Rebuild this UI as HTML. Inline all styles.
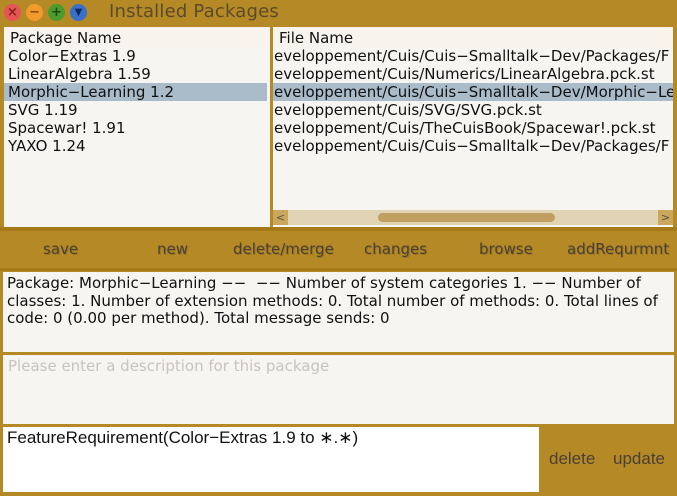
<!DOCTYPE html>
<html><head><style>
*{margin:0;padding:0;box-sizing:border-box}
body{width:677px;height:496px;background:#b58a26;position:relative;overflow:hidden;font-family:"DejaVu Sans","Liberation Sans",sans-serif;font-size:15px;color:#111}
.abs{position:absolute}
.title{left:109px;top:1px;font-size:18px;color:#5a4a2a;letter-spacing:0.2px}
.c{width:17px;height:17px;border-radius:50%;top:4px;text-align:center;font-size:13px;line-height:17px;font-weight:bold}
.panel{background:#f7f5f2;overflow:hidden;white-space:nowrap}
.row{height:18px;line-height:18px;padding-left:4px}
.hdr{background:#f8f3ec;height:20px;line-height:22px;padding-left:6px}
.sel{background:#aabbc9}
.btn{top:240px;color:#4a4035;font-size:15px;text-shadow:1px 1px 0 #9a7520}
</style></head><body>
<div class="abs c" style="left:4px;background:#e65454;color:#8a2020">×</div>
<div class="abs c" style="left:26px;background:#f39a2d;color:#8a4a10">−</div>
<div class="abs c" style="left:48px;background:#4d9a2d;color:#1d4a10">+</div>
<div class="abs c" style="left:70px;background:#3a6fc9;color:#102a60;font-size:10px">▼</div>
<div class="abs title">Installed Packages</div>

<div class="abs panel" style="left:4px;top:27px;width:266px;height:200px">
<div class="hdr">Package Name</div>
<div class="row">Color−Extras 1.9</div>
<div class="row">LinearAlgebra 1.59</div>
<div class="row sel" style="margin-right:3px">Morphic−Learning 1.2</div>
<div class="row">SVG 1.19</div>
<div class="row">Spacewar! 1.91</div>
<div class="row">YAXO 1.24</div>
</div>

<div class="abs panel" style="left:273px;top:27px;width:400px;height:200px">
<div class="hdr">File Name</div>
<div class="row" style="padding-left:1px">eveloppement/Cuis/Cuis−Smalltalk−Dev/Packages/F</div>
<div class="row" style="padding-left:1px">eveloppement/Cuis/Numerics/LinearAlgebra.pck.st</div>
<div class="row sel" style="padding-left:1px">eveloppement/Cuis/Cuis−Smalltalk−Dev/Morphic−Le</div>
<div class="row" style="padding-left:1px">eveloppement/Cuis/SVG/SVG.pck.st</div>
<div class="row" style="padding-left:1px">eveloppement/Cuis/TheCuisBook/Spacewar!.pck.st</div>
<div class="row" style="padding-left:1px">eveloppement/Cuis/Cuis−Smalltalk−Dev/Packages/F</div>
<div class="abs" style="left:0;top:183px;width:400px;height:15px;background:#e0d4b5"></div>
<div class="abs" style="left:0;top:183px;width:15px;height:15px;background:#c9a85e;color:#5a5040;font-size:11px;text-align:center;line-height:15px">&lt;</div>
<div class="abs" style="left:385px;top:183px;width:15px;height:15px;background:#c9a85e;color:#5a5040;font-size:11px;text-align:center;line-height:15px">&gt;</div>
<div class="abs" style="left:105px;top:186px;width:177px;height:9px;border-radius:5px;background:#c0a060"></div>
</div>

<div class="abs" style="left:0;top:227px;width:677px;height:4px;background:#a67a18"></div>
<div class="abs" style="left:0;top:268px;width:677px;height:3px;background:#a67a18"></div>
<div class="abs btn" style="left:43px">save</div>
<div class="abs btn" style="left:157px">new</div>
<div class="abs btn" style="left:233px">delete/merge</div>
<div class="abs btn" style="left:364px">changes</div>
<div class="abs btn" style="left:479px">browse</div>
<div class="abs btn" style="left:567px">addRequrmnt</div>

<div class="abs panel" style="left:3px;top:272px;width:671px;height:80px;white-space:normal;padding:3px 4px;line-height:17.5px">Package: Morphic−Learning −−&nbsp; −− Number of system categories 1. −− Number of classes: 1. Number of extension methods: 0. Total number of methods: 0. Total lines of code: 0 (0.00 per method). Total message sends: 0</div>

<div class="abs panel" style="left:3px;top:355px;width:671px;height:69px;padding:2px 5px;color:#c8c4bd">Please enter a description for this package</div>

<div class="abs" style="left:3px;top:427px;width:536px;height:65px;background:#fff;padding:1px 4px;font-family:'Liberation Sans','DejaVu Sans',sans-serif;font-size:17px">FeatureRequirement(Color−Extras 1.9 to ∗.∗)</div>
<div class="abs" style="left:549px;top:449px;color:#4a4035;font-size:17px;font-family:'Liberation Sans',sans-serif">delete</div>
<div class="abs" style="left:613px;top:449px;color:#4a4035;font-size:17px;font-family:'Liberation Sans',sans-serif">update</div>
</body></html>
